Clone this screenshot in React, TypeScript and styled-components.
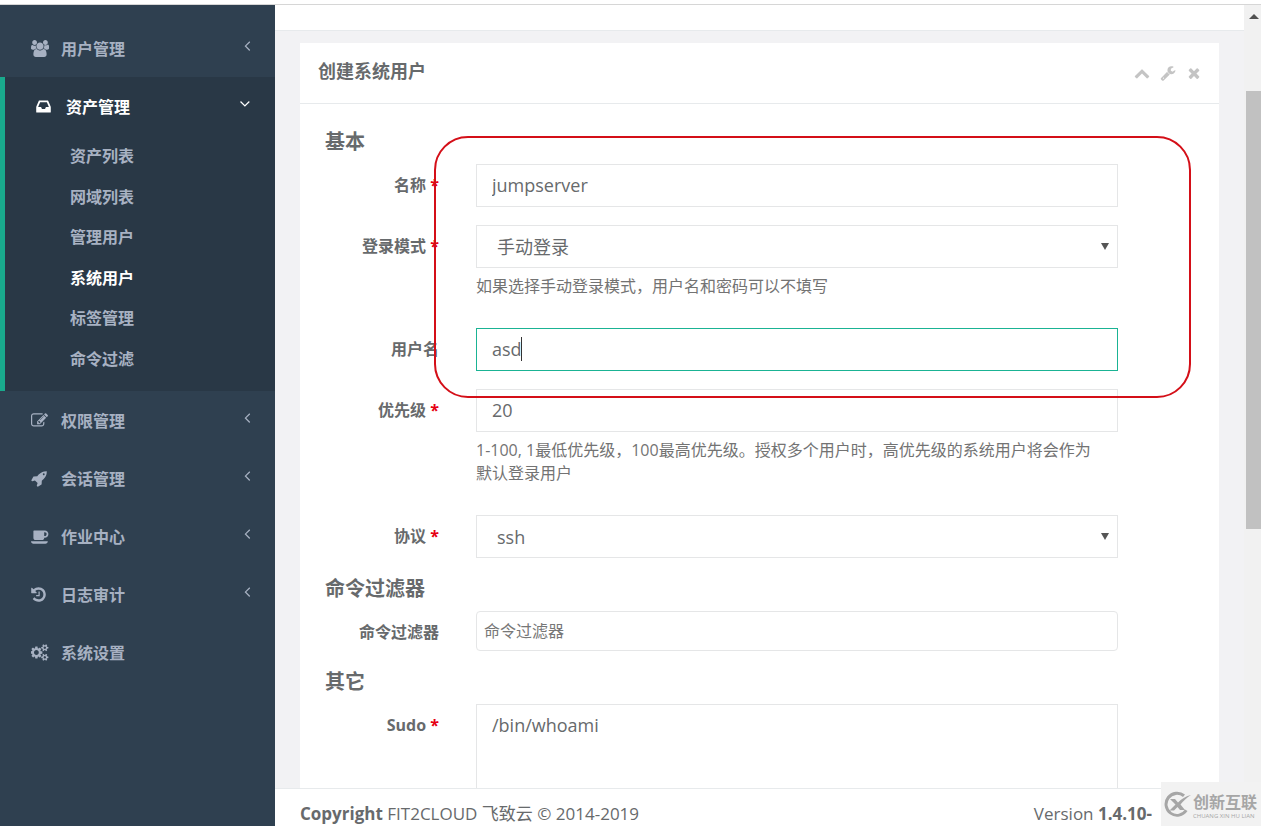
import React from 'react';
import styled, { createGlobalStyle, css } from 'styled-components';

const GlobalStyle = createGlobalStyle`
  *, *::before, *::after { box-sizing: border-box; }
  body {
    margin: 0;
    background: #fff;
    color: #676a6c;
    font-family: "Open Sans", "Noto Sans CJK SC", sans-serif;
    font-size: 16px;
    line-height: 24px;
  }
  button, input, select, textarea { font: inherit; color: inherit; }
`;

const ICONS = {
  users: {
    box: '64 0 1920 1792',
    ratio: 18,
    d: 'M657 896q-162 5-265 128h-134q-82 0-138-40.5t-56-118.5q0-353 124-353 6 0 43.5 21t97.5 42.5 119 21.5q67 0 133-23-5 37-5 66 0 159 93 293zm1071 637q0 120-73 189.5t-194 69.5h-874q-121 0-194-69.5t-73-189.5q0-53 3.5-103.5t14-109 26.5-108.5 43-97.5 62-81 85.5-53.5 111.5-20q10 0 43 21.5t73 48 107 48 135 21.5 135-21.5 107-48 73-48 43-21.5q61 0 111.5 20t85.5 53.5 62 81 43 97.5 26.5 108.5 14 109 3.5 103.5zm-1024-1277q0 106-75 181t-181 75-181-75-75-181 75-181 181-75 181 75 75 181zm704 384q0 159-112.5 271.5t-271.5 112.5-271.5-112.5-112.5-271.5 112.5-271.5 271.5-112.5 271.5 112.5 112.5 271.5zm576 225q0 78-56 118.5t-138 40.5h-134q-103-123-265-128 93-134 93-293 0-29-5-66 66 23 133 23 59 0 119-21.5t97.5-42.5 43.5-21q124 0 124 353zm-128-609q0 106-75 181t-181 75-181-75-75-181 75-181 181-75 181 75 75 181z',
  },
  inbox: {
    box: '128 0 1536 1792',
    ratio: 15,
    d: 'M1151 960h316q-1-3-2.5-8t-2.5-8l-212-496h-708l-212 496q-1 2-2.5 8t-2.5 8h316l95 192h320zm513 30v482q0 26-19 45t-45 19h-1408q-26 0-45-19t-19-45v-482q0-62 25-123l238-552q10-25 36.5-42t52.5-17h832q26 0 52.5 17t36.5 42l238 552q25 61 25 123z',
  },
  edit: {
    box: '0 0 1792 1792',
    ratio: 17,
    d: 'M888 1184l116-116-152-152-116 116v56h96v96h56zm440-720q-16-16-33 1l-350 350q-17 17-1 33t33-1l350-350q17-17 1-33zm80 594v190q0 119-84.5 203.5t-203.5 84.5h-832q-119 0-203.5-84.5t-84.5-203.5v-832q0-119 84.5-203.5t203.5-84.5h832q63 0 117 25 15 7 18 23 3 17-9 29l-49 49q-14 14-32 8-23-6-45-6h-832q-66 0-113 47t-47 113v832q0 66 47 113t113 47h832q66 0 113-47t47-113v-126q0-13 9-22l64-64q15-15 35-7t20 29zm-96-738l288 288-672 672h-288v-288zm444 132l-92 92-288-288 92-92q28-28 68-28t68 28l152 152q28 28 28 68t-28 68z',
  },
  rocket: {
    box: '0 0 1792 1792',
    ratio: 17,
    d: 'M1440 448q0-40-28-68t-68-28-68 28-28 68 28 68 68 28 68-28 28-68zm224-288q0 249-75.5 430.5t-253.5 360.5q-81 80-195 176l-20 379q-2 16-16 26l-384 224q-7 4-16 4-12 0-23-9l-64-64q-13-14-8-32l85-276-281-281-276 85q-3 1-9 1-14 0-23-9l-64-64q-17-19-5-39l224-384q10-14 26-16l379-20q96-114 176-195 188-187 358-258t431-71q14 0 24 9.5t10 22.5z',
  },
  coffee: {
    box: '0 0 1920 1792',
    ratio: 18,
    d: 'M1664 640q0-80-56-136t-136-56h-64v384h64q80 0 136-56t56-136zm-1664 768h1792q0 106-75 181t-181 75h-1280q-106 0-181-75t-75-181zm1856-768q0 159-112.5 271.5t-271.5 112.5h-64v32q0 92-66 158t-158 66h-704q-92 0-158-66t-66-158v-736q0-26 19-45t45-19h1152q159 0 271.5 112.5t112.5 271.5z',
  },
  history: {
    box: '128 0 1536 1792',
    ratio: 15,
    d: 'M1664 896q0 156-61 298t-164 245-245 164-298 61q-172 0-327-72.5t-264-204.5q-7-10-6.5-22.5t8.5-20.5l137-138q10-9 25-9 16 2 23 12 73 95 179 147t225 52q104 0 198.5-40.5t163.5-109.5 109.5-163.5 40.5-198.5-40.5-198.5-109.5-163.5-163.5-109.5-198.5-40.5q-98 0-188 35.5t-160 101.5l137 138q31 30 14 69-17 40-59 40h-448q-26 0-45-19t-19-45v-448q0-42 40-59 39-17 69 14l130 129q107-101 244.5-156.5t284.5-55.5q156 0 298 61t245 164 164 245 61 298zm-640-288v448q0 14-9 23t-23 9h-320q-14 0-23-9t-9-23v-64q0-14 9-23t23-9h224v-352q0-14 9-23t23-9h64q14 0 23 9t9 23z',
  },
  cogs: {
    box: '0 0 1920 1792',
    ratio: 18,
    d: 'M832 896q0-106-75-181t-181-75-181 75-75 181 75 181 181 75 181-75 75-181zm768 512q0-52-38-90t-90-38-90 38-38 90q0 53 37.5 90.5t90.5 37.5 90.5-37.5 37.5-90.5zm0-1024q0-52-38-90t-90-38-90 38-38 90q0 53 37.5 90.5t90.5 37.5 90.5-37.5 37.5-90.5zm-384 421v185q0 10-7 19.5t-16 10.5l-155 24q-11 35-32 76 34 48 90 115 7 11 7 20 0 12-7 19-23 30-82.5 89.5t-78.5 59.5q-11 0-21-7l-115-90q-37 19-77 31-11 108-23 155-7 24-30 24h-186q-11 0-20-7.5t-10-17.5l-23-153q-34-10-75-31l-118 89q-7 7-20 7-11 0-21-8-144-133-144-160 0-9 7-19 10-14 41-53t47-61q-23-44-35-82l-152-24q-10-1-17-9.5t-7-19.5v-185q0-10 7-19.5t16-10.5l155-24q11-35 32-76-34-48-90-115-7-11-7-20 0-12 7-20 22-30 82-89t79-59q11 0 21 7l115 90q34-18 77-32 11-108 23-154 7-24 30-24h186q11 0 20 7.5t10 17.5l23 153q34 10 75 31l118-89q8-7 20-7 11 0 21 8 144 133 144 160 0 8-7 19-12 16-42 54t-45 60q23 48 34 82l152 23q10 2 17 10.5t7 19.5zm640 533v140q0 16-149 31-12 27-30 52 51 113 51 138 0 4-4 7-122 71-124 71-8 0-46-47t-52-68q-20 2-30 2t-30-2q-14 21-52 68t-46 47q-2 0-124-71-4-3-4-7 0-25 51-138-18-25-30-52-149-15-149-31v-140q0-16 149-31 13-29 30-52-51-113-51-138 0-4 4-7 4-2 35-20t59-34 30-16q8 0 46 46.5t52 67.5q20-2 30-2t30 2q51-71 92-112l6-2q4 0 124 70 4 3 4 7 0 25-51 138 17 23 30 52 149 15 149 31zm0-1024v140q0 16-149 31-12 27-30 52 51 113 51 138 0 4-4 7-122 71-124 71-8 0-46-47t-52-68q-20 2-30 2t-30-2q-14 21-52 68t-46 47q-2 0-124-71-4-3-4-7 0-25 51-138-18-25-30-52-149-15-149-31v-140q0-16 149-31 13-29 30-52-51-113-51-138 0-4 4-7 4-2 35-20t59-34 30-16q8 0 46 46.5t52 67.5q20-2 30-2t30 2q51-71 92-112l6-2q4 0 124 70 4 3 4 7 0 25-51 138 17 23 30 52 149 15 149 31z',
  },
  angleLeft: {
    box: '576 0 704 1792',
    ratio: 7,
    d: 'M1203 544q0 13-10 23l-393 393 393 393q10 10 10 23t-10 23l-50 50q-10 10-23 10t-23-10l-466-466q-10-10-10-23t10-23l466-466q10-10 23-10t23 10l50 50q10 10 10 23z',
  },
  angleDown: {
    box: '384 0 1152 1792',
    ratio: 11,
    d: 'M1395 736q0 13-10 23l-466 466q-10 10-23 10t-23-10l-466-466q-10-10-10-23t10-23l50-50q10-10 23-10t23 10l393 393 393-393q10-10 23-10t23 10l50 50q10 10 10 23z',
  },
  chevronUp: {
    box: '0 0 1792 1792',
    ratio: 17,
    d: 'M1683 1331l-166 165q-19 19-45 19t-45-19l-531-531-531 531q-19 19-45 19t-45-19l-166-165q-19-19-19-45.5t19-45.5l742-741q19-19 45-19t45 19l742 741q19 19 19 45.5t-19 45.5z',
  },
  wrench: {
    box: '0 0 1792 1792',
    ratio: 17,
    d: 'M448 1472q0-26-19-45t-45-19-45 19-19 45 19 45 45 19 45-19 19-45zm644-420l-682 682q-37 37-90 37-52 0-91-37l-106-108q-38-36-38-90 0-53 38-91l681-681q39 98 114.5 173.5t173.5 114.5zm634-435q0 39-23 106-47 134-164.5 217.5t-258.5 83.5q-185 0-316.5-131.5t-131.5-316.5 131.5-316.5 316.5-131.5q58 0 121.5 16.5t107.5 46.5q16 11 16 28t-16 28l-293 169v224l193 107q5-3 79-48.5t135.5-81 70.5-35.5q15 0 23.5 10t8.5 25z',
  },
  times: {
    box: '0 0 1792 1792',
    ratio: 17,
    d: 'M1490 1322q0 40-28 68l-136 136q-28 28-68 28t-68-28l-294-294-294 294q-28 28-68 28t-68-28l-136-136q-28-28-28-68t28-68l294-294-294-294q-28-28-28-68t28-68l136-136q28-28 68-28t68 28l294 294 294-294q28-28 68-28t68 28l136 136q28 28 28 68t-28 68l-294 294 294 294q28 28 28 68z',
  },
};

type IconName = keyof typeof ICONS;

const Svg = styled.svg`
  display: block;
  flex: none;
  fill: currentColor;
`;

function Icon({ name, size = 17 }: { name: IconName; size?: number }) {
  const icon = ICONS[name];
  return (
    <Svg viewBox={icon.box} width={Math.round((icon.ratio * size) / 17)} height={size} aria-hidden="true">
      <path d={icon.d} />
    </Svg>
  );
}

/* ---------- page frame ---------- */

const Page = styled.div`
  display: flex;
  flex-direction: column;
  height: 100vh;
  overflow: hidden;
`;

const BrowserEdge = styled.div`
  flex: none;
  height: 5px;
  background: #fff;
  border-bottom: 1px solid #d6d6d6;
`;

const Shell = styled.div`
  flex: 1;
  min-height: 0;
  display: flex;
`;

/* ---------- sidebar ---------- */

const Sidebar = styled.nav`
  flex: none;
  width: 275px;
  padding-top: 14px;
  background: #2f4050;
  color: #a7b1c2;
  font-weight: 600;
`;

const MenuList = styled.ul`
  list-style: none;
  margin: 0;
  padding: 0;
`;

const MenuItem = styled.li<{ $active?: boolean }>`
  ${({ $active }) =>
    $active &&
    css`
      background: #293846;
      border-left: 5px solid #19aa8d;
    `}
`;

const MenuLink = styled.a<{ $active?: boolean }>`
  display: flex;
  align-items: center;
  height: 58px;
  padding: 1px 24px 0 31px;
  color: ${({ $active }) => ($active ? '#fff' : 'inherit')};
  text-decoration: none;
`;

const MenuIcon = styled.span`
  flex: none;
  width: 30px;
`;

const MenuText = styled.span`
  flex: 1;
`;

const MenuArrow = styled.span`
  padding-bottom: 7px;
`;

const SubList = styled.ul`
  list-style: none;
  margin: 0;
  padding: 1px 0 12px;
  height: 256px;
  display: grid;
  grid-auto-rows: 1fr;
`;

const SubLink = styled.a<{ $current?: boolean }>`
  display: flex;
  align-items: center;
  height: 100%;
  padding-left: 65px;
  color: ${({ $current }) => ($current ? '#fff' : 'inherit')};
  text-decoration: none;
`;

/* ---------- content column ---------- */

const Content = styled.main`
  flex: 1;
  min-width: 0;
  display: flex;
  flex-direction: column;
  background: #f2f2f4;
`;

const Heading = styled.div`
  flex: none;
  height: 26px;
  background: #fff;
  border-bottom: 1px solid #e7eaec;
`;

const ScrollArea = styled.div`
  flex: 1;
  min-height: 0;
  overflow: hidden;
  padding: 12px 25px 0;
`;

const Card = styled.section`
  position: relative;
  background: #fff;
`;

const CardHeader = styled.header`
  display: flex;
  align-items: center;
  justify-content: space-between;
  height: 61px;
  padding: 0 17px 0 18px;
  border-bottom: 1px solid #e7eaec;
`;

const CardTitle = styled.h5`
  margin: 0;
  padding-bottom: 4px;
  font-size: 18px;
  font-weight: 600;
`;

const Tools = styled.div`
  display: flex;
  gap: 10px;
`;

const ToolButton = styled.button`
  padding: 0;
  border: 0;
  background: none;
  color: #c4c4c4;
`;

const Form = styled.form`
  padding: 25px 101px 25px 25px;
`;

const SectionTitle = styled.h3`
  margin: 0 0 9px;
  font-size: 20px;
  line-height: 26px;
  font-weight: 600;
`;

const Row = styled.div`
  display: grid;
  grid-template-columns: 114px 1fr;
  column-gap: 37px;
  margin-bottom: 18px;
`;

const Label = styled.label`
  padding-top: 9px;
  text-align: right;
  font-weight: 700;
  white-space: nowrap;
`;

const Star = styled.span`
  color: #e60012;
`;

const Field = styled.div`
  position: relative;
`;

const control = css`
  display: block;
  width: 100%;
  margin: 0;
  border: 1px solid #e5e6e7;
  border-radius: 0;
  outline: 0;
  background: #fff;
  font-size: 18px;
`;

const TextInput = styled.input<{ $active?: boolean }>`
  ${control}
  height: 43px;
  padding: 0 15px 2px;
  ${({ $active }) => $active && 'border-color: #1ab394;'}
`;

const TagInput = styled.input`
  ${control}
  height: 40px;
  padding: 0 7px;
  border-radius: 4px;
  font-size: 16px;
  &::placeholder { color: #777; opacity: 1; }
`;

const Select = styled.select`
  ${control}
  appearance: none;
  height: 43px;
  padding: 0 20px;
`;

const TextArea = styled.textarea`
  ${control}
  height: 150px;
  padding: 8px 15px;
  resize: none;
`;

const SelectArrow = styled.svg`
  position: absolute;
  top: 17px;
  right: 9px;
  fill: #555;
  pointer-events: none;
`;

const Caret = styled.span`
  position: absolute;
  top: 9px;
  left: 45px;
  width: 1px;
  height: 24px;
  background: #333;
`;

const Help = styled.p`
  margin: 7px 0 12px;
  line-height: 23px;
  color: #737373;
`;

const Highlight = styled.div`
  position: absolute;
  z-index: 2;
  top: 93px;
  left: 134px;
  right: 28px;
  height: 262px;
  border: 2px solid #d40f18;
  border-radius: 34px;
  pointer-events: none;
`;

const Footer = styled.footer`
  flex: none;
  display: flex;
  justify-content: space-between;
  height: 38px;
  padding: 13px 92px 0 25px;
  background: #fff;
  border-top: 1px solid #e7eaec;
  font-size: 17px;
  white-space: nowrap;
`;

const FooterStrong = styled.strong`
  font-weight: 700;
`;

/* ---------- scrollbar ---------- */

const Scrollbar = styled.div`
  flex: none;
  width: 17px;
  display: flex;
  flex-direction: column;
  padding-left: 2px;
  background: #f1f1f1;
`;

const ScrollUp = styled.svg`
  flex: none;
  display: block;
  fill: #505050;
`;

const ScrollSpace = styled.div<{ $grow: number }>`
  flex: ${({ $grow }) => $grow} 0 0;
`;

const ScrollThumb = styled(ScrollSpace)`
  background: #c1c1c1;
`;

/* ---------- corner mark ---------- */

const CornerMark = styled.div`
  position: fixed;
  z-index: 3;
  right: 0;
  bottom: 0;
  display: flex;
  align-items: center;
  gap: 2px;
  width: 100px;
  height: 44px;
  padding-left: 2px;
  background: #f2f2f2;
  color: #a6a6a6;
`;

const MarkText = styled.div`
  padding-top: 4px;
  white-space: nowrap;
`;

const MarkName = styled.div`
  font-size: 16px;
  line-height: 20px;
  font-weight: 700;
`;

const MarkSub = styled.div`
  font-size: 6px;
  line-height: 8px;
`;

type Entry = { icon: IconName; text: string; arrow?: boolean };

const AFTER: Entry[] = [
  { icon: 'edit', text: '权限管理', arrow: true },
  { icon: 'rocket', text: '会话管理', arrow: true },
  { icon: 'coffee', text: '作业中心', arrow: true },
  { icon: 'history', text: '日志审计', arrow: true },
  { icon: 'cogs', text: '系统设置' },
];

const ASSETS = ['资产列表', '网域列表', '管理用户', '系统用户', '标签管理', '命令过滤'];

function MenuEntry({ icon, text, arrow }: Entry) {
  return (
    <MenuItem>
      <MenuLink href="#">
        <MenuIcon><Icon name={icon} /></MenuIcon>
        <MenuText>{text}</MenuText>
        {arrow && <MenuArrow><Icon name="angleLeft" /></MenuArrow>}
      </MenuLink>
    </MenuItem>
  );
}

function FieldRow({ id, label, required, children }: {
  id: string;
  label: string;
  required?: boolean;
  children: React.ReactNode;
}) {
  return (
    <Row>
      <Label htmlFor={id}>
        {label}
        {required && <Star> *</Star>}
      </Label>
      <div>{children}</div>
    </Row>
  );
}

function SelectField({ id, value }: { id: string; value: string }) {
  return (
    <Field>
      <Select id={id} defaultValue={value}>
        <option>{value}</option>
      </Select>
      <SelectArrow width="8" height="8" viewBox="0 0 8 8" aria-hidden="true">
        <path d="M0 1h8L4 8z" />
      </SelectArrow>
    </Field>
  );
}

export default function App() {
  return (
    <>
      <GlobalStyle />
      <Page>
        <BrowserEdge />
        <Shell>
          <Sidebar>
            <MenuList>
              <MenuEntry icon="users" text="用户管理" arrow />
              <MenuItem $active>
                <MenuLink href="#" $active>
                  <MenuIcon><Icon name="inbox" /></MenuIcon>
                  <MenuText>资产管理</MenuText>
                  <MenuArrow><Icon name="angleDown" /></MenuArrow>
                </MenuLink>
                <SubList>
                  {ASSETS.map((text) => (
                    <li key={text}>
                      <SubLink href="#" $current={text === '系统用户'}>{text}</SubLink>
                    </li>
                  ))}
                </SubList>
              </MenuItem>
              {AFTER.map((entry) => <MenuEntry key={entry.text} {...entry} />)}
            </MenuList>
          </Sidebar>

          <Content>
            <Heading />
            <ScrollArea>
              <Card>
                <CardHeader>
                  <CardTitle>创建系统用户</CardTitle>
                  <Tools>
                    <ToolButton type="button" aria-label="收起"><Icon name="chevronUp" size={16} /></ToolButton>
                    <ToolButton type="button" aria-label="设置"><Icon name="wrench" size={16} /></ToolButton>
                    <ToolButton type="button" aria-label="关闭"><Icon name="times" size={16} /></ToolButton>
                  </Tools>
                </CardHeader>
                <Form>
                  <SectionTitle>基本</SectionTitle>
                  <FieldRow id="name" label="名称" required>
                    <TextInput id="name" type="text" defaultValue="jumpserver" />
                  </FieldRow>
                  <FieldRow id="login-mode" label="登录模式" required>
                    <SelectField id="login-mode" value="手动登录" />
                    <Help>如果选择手动登录模式，用户名和密码可以不填写</Help>
                  </FieldRow>
                  <FieldRow id="username" label="用户名">
                    <Field>
                      <TextInput id="username" type="text" defaultValue="asd" $active />
                      <Caret />
                    </Field>
                  </FieldRow>
                  <FieldRow id="priority" label="优先级" required>
                    <TextInput id="priority" type="text" defaultValue="20" />
                    <Help>
                      1-100, 1最低优先级，100最高优先级。授权多个用户时，高优先级的系统用户将会作为
                      <br />
                      默认登录用户
                    </Help>
                  </FieldRow>
                  <FieldRow id="protocol" label="协议" required>
                    <SelectField id="protocol" value="ssh" />
                  </FieldRow>
                  <SectionTitle>命令过滤器</SectionTitle>
                  <FieldRow id="filter" label="命令过滤器">
                    <TagInput id="filter" type="text" placeholder="命令过滤器" />
                  </FieldRow>
                  <SectionTitle>其它</SectionTitle>
                  <FieldRow id="sudo" label="Sudo" required>
                    <TextArea id="sudo" defaultValue="/bin/whoami" />
                  </FieldRow>
                </Form>
                <Highlight />
              </Card>
            </ScrollArea>
            <Footer>
              <span><FooterStrong>Copyright</FooterStrong> FIT2CLOUD 飞致云 © 2014-2019</span>
              <span>Version <FooterStrong>1.4.10-</FooterStrong></span>
            </Footer>
          </Content>

          <Scrollbar aria-hidden="true">
            <ScrollUp width="15" height="17" viewBox="0 0 15 17">
              <path d="M3 14h10L8 9z" />
            </ScrollUp>
            <ScrollSpace $grow={69} />
            <ScrollThumb $grow={438} />
            <ScrollSpace $grow={297} />
          </Scrollbar>
        </Shell>
        <CornerMark>
          <Svg width="28" height="28" viewBox="0 0 28 28" aria-hidden="true">
            <path d="M22 4.500A12.500 12.500 0 1 0 24.500 21l-2.500-1.500a9.500 9.500 0 1 1-2-12.500z" />
            <path d="M7 9h5l3 3.500C19 8.500 23 6 28 5c-4 2.500-8 6-10.500 9.500L22 20h-5l-2.500-3L11 20.500H6.500l6-6z" />
          </Svg>
          <MarkText>
            <MarkName>创新互联</MarkName>
            <MarkSub>CHUANG XIN HU LIAN</MarkSub>
          </MarkText>
        </CornerMark>
      </Page>
    </>
  );
}
